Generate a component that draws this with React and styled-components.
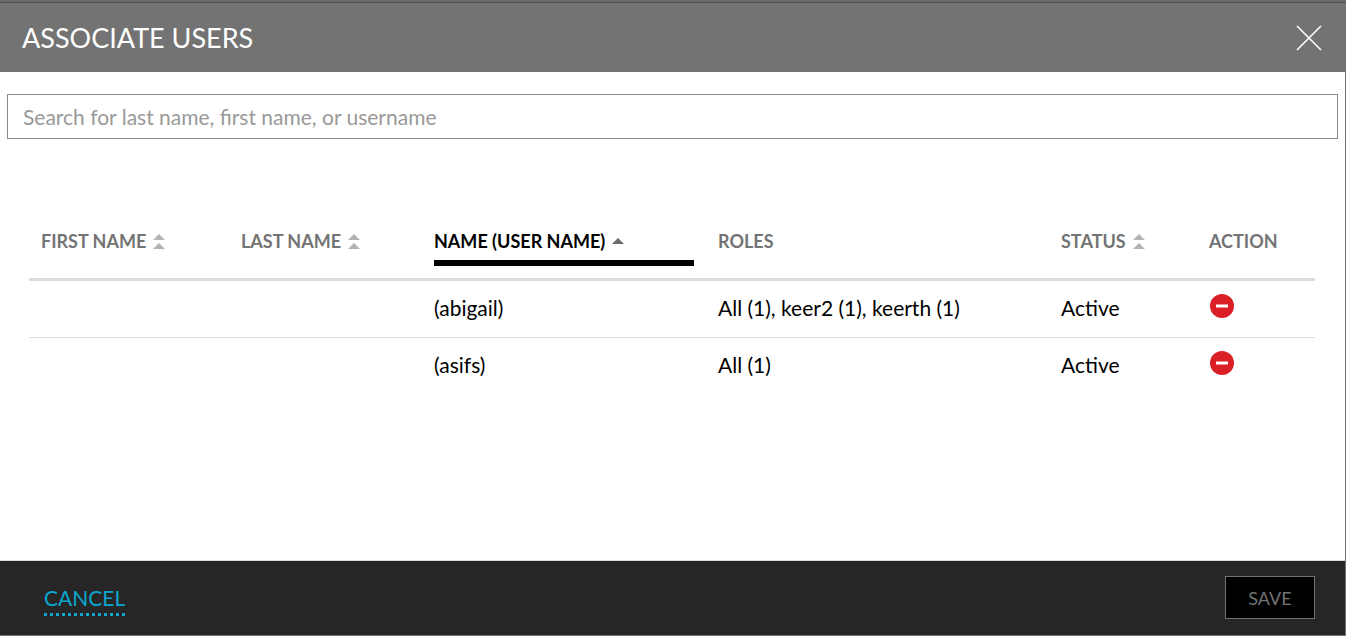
import React from "react";
import styled, { createGlobalStyle } from "styled-components";

const GlobalStyle = createGlobalStyle`
  *, *::before, *::after { box-sizing: border-box; }
  body { margin: 0; background: #fff; }
  body, button, input { font-family: Lato, "Open Sans", sans-serif; }
`;

const Dialog = styled.div`
  display: flex;
  flex-direction: column;
  min-height: 100vh;
  border-top: 2px solid #696969;
  border-right: 1px solid #737373;
  border-bottom: 1px solid #737373;
  background: #fff;
  color: #000;
`;

const Header = styled.header`
  display: flex;
  align-items: center;
  justify-content: space-between;
  height: 70px;
  margin-right: -1px;
  padding: 0 24px 0 22px;
  border-top: 1px solid #505050;
  background: #737373;
`;

const Title = styled.h1`
  margin: 0;
  color: #fff;
  font-size: 27px;
  font-weight: 400;
  line-height: 32px;
`;

const IconButton = styled.button`
  display: block;
  padding: 0;
  border: 0;
  background: none;
  cursor: pointer;

  svg { display: block; }
`;

const Body = styled.main`
  flex: 1;
  padding: 22px 7px;
`;

const SearchInput = styled.input`
  display: block;
  width: 100%;
  height: 45px;
  padding: 0 15px;
  border: 1px solid #8a8a8a;
  border-radius: 0;
  background: #fff;
  color: #000;
  font-size: 21px;

  &::placeholder { color: #999; opacity: 1; }
`;

const TableArea = styled.div`
  padding: 81px 23px 0 22px;
`;

const Table = styled.table`
  width: 100%;
  table-layout: fixed;
  border-collapse: separate;
  border-spacing: 0;
`;

const Col = styled.col`
  width: ${({ $width }) => ($width ? `${$width}px` : "auto")};
`;

const HeadCell = styled.th`
  height: 61px;
  padding: 0 12px;
  border-bottom: 3px solid #dcdcdc;
  text-align: left;
  vertical-align: top;
`;

const HeadLabel = styled.div`
  display: flex;
  align-items: center;
  height: 46px;
  padding-top: 2px;
  border-bottom: 6px solid ${({ $active }) => ($active ? "#000" : "transparent")};
  color: ${({ $active }) => ($active ? "#000" : "#737373")};
  font-size: 18px;
  font-weight: 700;
  line-height: 24px;
  white-space: nowrap;
`;

const SortButton = styled.button`
  display: flex;
  align-items: center;
  gap: 7px;
  padding: 0;
  border: 0;
  background: none;
  color: inherit;
  font-size: inherit;
  font-weight: inherit;
  line-height: inherit;
  white-space: nowrap;
  cursor: pointer;
`;

const Cell = styled.td`
  height: 57px;
  padding: 0 12px 2px;
  border-bottom: 1px solid #dcdcdc;
  font-size: 21px;
  line-height: 26px;

  tr:last-child > & { border-bottom-color: transparent; }
`;

const Footer = styled.footer`
  display: flex;
  align-items: center;
  justify-content: space-between;
  height: 75px;
  padding: 0 30px 0 44px;
  border-top: 1px solid #dcdcdc;
  background: #262626;
`;

const CancelLink = styled.a`
  padding: 4px 0 1px;
  border-bottom: 3px dotted #0ba7d1;
  color: #0ba7d1;
  font-size: 21px;
  line-height: 28px;
  text-decoration: none;
`;

const SaveButton = styled.button`
  width: 90px;
  height: 43px;
  margin-bottom: 2px;
  padding: 2px 0 0;
  border: 1px solid #737373;
  background: #000;
  color: #737373;
  font-size: 18px;
`;

const CloseIcon = () => (
  <svg width="26" height="26" viewBox="0 0 26 26" aria-hidden="true">
    <path d="M1 1L25 25M25 1L1 25" stroke="#fff" strokeWidth="1.6" fill="none" />
  </svg>
);

const SortIcon = ({ active }) =>
  active ? (
    <svg width="12" height="6" viewBox="0 0 12 6" aria-hidden="true">
      <path d="M6 0L12 6H0Z" fill="#6b6b6b" />
    </svg>
  ) : (
    <svg width="12" height="16" viewBox="0 0 12 16" aria-hidden="true">
      <path d="M6 1L12 7H0ZM6 10L12 16H0Z" fill="#b3b3b3" />
    </svg>
  );

const RemoveIcon = () => (
  <svg width="24" height="24" viewBox="0 0 24 24" aria-hidden="true">
    <circle cx="12" cy="12" r="12" fill="#da1f26" />
    <path d="M6 10.5H18V13.5H6Z" fill="#fff" />
  </svg>
);

const RemoveButton = styled(IconButton)`
  margin: 0 0 4px 1px;
`;

const columns = [
  { label: "FIRST NAME", width: 200, sortable: true },
  { label: "LAST NAME", width: 193, sortable: true },
  { label: "NAME (USER NAME)", width: 284, sortable: true, active: true },
  { label: "ROLES" },
  { label: "STATUS", width: 148, sortable: true },
  { label: "ACTION", width: 118 },
];

const users = [
  { first: "", last: "", name: "(abigail)", roles: "All (1), keer2 (1), keerth (1)", status: "Active" },
  { first: "", last: "", name: "(asifs)", roles: "All (1)", status: "Active" },
];

export default function App() {
  return (
    <>
      <GlobalStyle />
      <Dialog role="dialog" aria-labelledby="dialog-title">
        <Header>
          <Title id="dialog-title">ASSOCIATE USERS</Title>
          <IconButton type="button" aria-label="Close">
            <CloseIcon />
          </IconButton>
        </Header>
        <Body>
          <SearchInput
            type="text"
            aria-label="Search users"
            placeholder="Search for last name, first name, or username"
          />
          <TableArea>
            <Table>
              <colgroup>
                {columns.map((c) => (
                  <Col key={c.label} $width={c.width} />
                ))}
              </colgroup>
              <thead>
                <tr>
                  {columns.map((c) => (
                    <HeadCell key={c.label} scope="col" aria-sort={c.active ? "ascending" : undefined}>
                      <HeadLabel $active={c.active}>
                        {c.sortable ? (
                          <SortButton type="button">
                            {c.label}
                            <SortIcon active={c.active} />
                          </SortButton>
                        ) : (
                          c.label
                        )}
                      </HeadLabel>
                    </HeadCell>
                  ))}
                </tr>
              </thead>
              <tbody>
                {users.map((u) => (
                  <tr key={u.name}>
                    <Cell>{u.first}</Cell>
                    <Cell>{u.last}</Cell>
                    <Cell>{u.name}</Cell>
                    <Cell>{u.roles}</Cell>
                    <Cell>{u.status}</Cell>
                    <Cell>
                      <RemoveButton type="button" aria-label={`Remove ${u.name}`}>
                        <RemoveIcon />
                      </RemoveButton>
                    </Cell>
                  </tr>
                ))}
              </tbody>
            </Table>
          </TableArea>
        </Body>
        <Footer>
          <CancelLink href="#cancel">CANCEL</CancelLink>
          <SaveButton type="button">SAVE</SaveButton>
        </Footer>
      </Dialog>
    </>
  );
}
